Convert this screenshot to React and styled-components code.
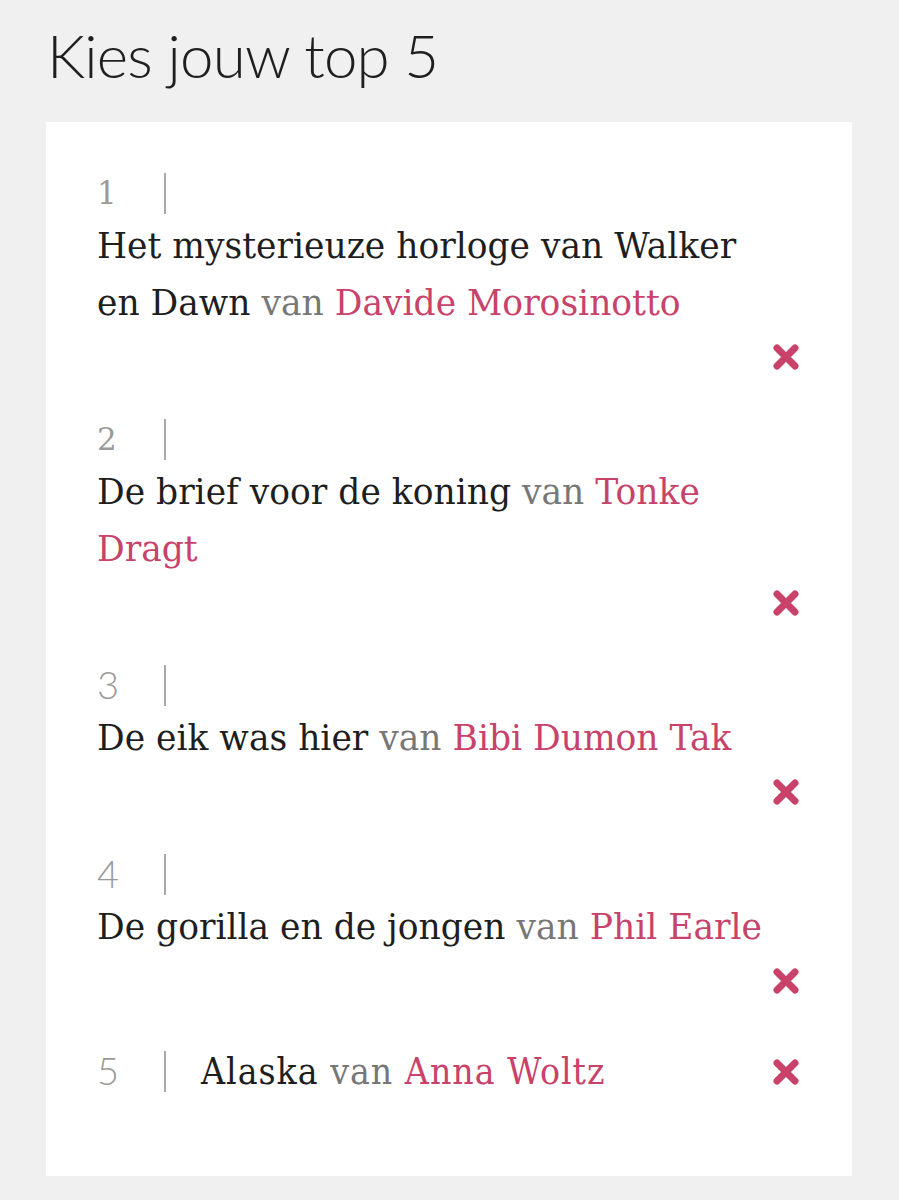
import styled, { createGlobalStyle } from "styled-components";

const GlobalStyle = createGlobalStyle`
  html, body {
    margin: 0;
    background: #f0f0f0;
  }
`;

const books = [
  { title: "Het mysterieuze horloge van Walker en Dawn", author: "Davide Morosinotto", serifNum: true },
  { title: "De brief voor de koning", author: "Tonke Dragt", serifNum: true },
  { title: "De eik was hier", author: "Bibi Dumon Tak" },
  { title: "De gorilla en de jongen", author: "Phil Earle" },
  { title: "Alaska", author: "Anna Woltz", inline: true },
];

const RemoveIcon = () => (
  <svg width="28" height="28" viewBox="0 0 28 28">
    <path
      d="M5 5 L23 23 M23 5 L5 23"
      stroke="#c8426a"
      strokeWidth="7"
      strokeLinecap="round"
    />
  </svg>
);

const App = () => {
  return (
    <Page>
      <GlobalStyle />
      <Heading>Kies jouw top 5</Heading>
      <Card>
        {books.map((b, i) => (
          <Item key={b.title} $inline={b.inline}>
            <NumberRow>
              <Rank $serif={b.serifNum}>{i + 1}</Rank>
              <Divider />
            </NumberRow>
            <Title $inline={b.inline}>
              {b.title} <By>van</By> <Author>{b.author}</Author>
            </Title>
            <RemoveRow $inline={b.inline}>
              <RemoveButton aria-label="Verwijder">
                <RemoveIcon />
              </RemoveButton>
            </RemoveRow>
          </Item>
        ))}
      </Card>
    </Page>
  );
};

const Page = styled.div`
  padding: 14px 47px 25px 46px;
`;

const Heading = styled.h1`
  margin: 0 0 26px 1px;
  font-family: Lato, "Open Sans", sans-serif;
  font-weight: 300;
  font-size: 60px;
  letter-spacing: -0.8px;
  line-height: 82px;
  color: #1f1f1f;
`;

const Card = styled.div`
  background: #fff;
  padding: 51px 52px 76px 51px;
`;

const Item = styled.div`
  display: flex;
  flex-direction: ${(p) => (p.$inline ? "row" : "column")};
  align-items: ${(p) => (p.$inline ? "center" : "stretch")};
  margin-bottom: ${(p) => (p.$inline ? "0" : "48px")};
`;

const NumberRow = styled.div`
  display: flex;
  align-items: flex-end;
  height: 41px;
`;

const Rank = styled.span`
  width: 67px;
  font-family: ${(p) =>
    p.$serif ? '"DejaVu Serif", serif' : 'Lato, "Open Sans", sans-serif'};
  font-weight: ${(p) => (p.$serif ? 400 : 300)};
  font-size: ${(p) => (p.$serif ? "31px" : "38px")};
  line-height: 1;
  color: #9a9a9a;
  padding-bottom: ${(p) => (p.$serif ? "5px" : "3px")};
`;

const Divider = styled.span`
  align-self: stretch;
  width: 2px;
  background: #a9a9a9;
`;

const Title = styled.div`
  flex: ${(p) => (p.$inline ? "1" : "none")};
  max-width: 680px;
  margin-left: ${(p) => (p.$inline ? "35px" : "0")};
  padding-top: ${(p) => (p.$inline ? "0" : "4px")};
  font-family: "DejaVu Serif", serif;
  font-size: 34.5px;
  line-height: 57px;
  color: #1e1e1e;
  ${(p) =>
    p.$inline && "font-stretch: condensed; font-size: 37px; letter-spacing: 1px;"}
`;

const By = styled.span`
  color: #777;
`;

const Author = styled.span`
  color: #c8426a;
`;

const RemoveRow = styled.div`
  display: flex;
  justify-content: flex-end;
  margin-top: ${(p) => (p.$inline ? "0" : "11px")};
`;

const RemoveButton = styled.button`
  display: flex;
  padding: 0;
  border: 0;
  background: none;
  cursor: pointer;
`;

export default App;
